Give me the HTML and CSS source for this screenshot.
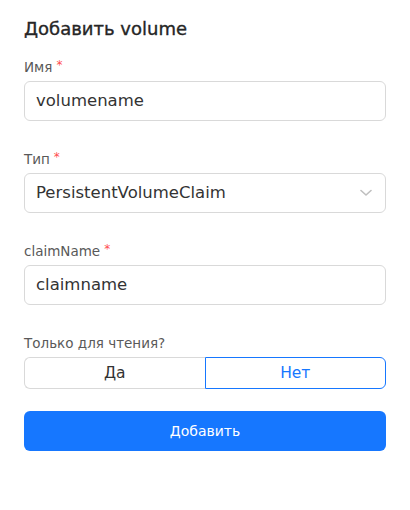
FILE: index.html
```html
<!DOCTYPE html>
<html lang="ru">
<head>
<meta charset="utf-8">
<link rel="stylesheet" href="styles.css">
</head>
<body>
<div class="panel">
  <h2 class="title">Добавить volume</h2>
  <div class="item">
    <div class="label">Имя<span class="req">*</span></div>
    <div class="input">volumename</div>
  </div>
  <div class="item">
    <div class="label">Тип<span class="req">*</span></div>
    <div class="input select">
      <span>PersistentVolumeClaim</span>
      <svg class="chev" width="12" height="8" viewBox="0 0 12 8"><path d="M1 1.5 L6 6 L11 1.5" fill="none" stroke="#bfbfbf" stroke-width="1.6" stroke-linecap="round" stroke-linejoin="round"/></svg>
    </div>
  </div>
  <div class="item">
    <div class="label">claimName<span class="req">*</span></div>
    <div class="input">claimname</div>
  </div>
  <div class="item last">
    <div class="label">Только для чтения?</div>
    <div class="radio">
      <div class="opt">Да</div>
      <div class="opt active">Нет</div>
    </div>
  </div>
  <button class="submit">Добавить</button>
</div>
</body>
</html>
```
FILE: styles.css
```css
html, body { margin: 0; padding: 0; background: #fff; }
body { font-family: "DejaVu Sans", "Noto Sans", sans-serif; color: #333; }
.panel { padding: 16px 24px 24px; width: 362px; }
.title { margin: 0 0 15px; font-size: 18px; font-weight: 400; line-height: 26px; color: #262626; -webkit-text-stroke: 0.35px #262626; }
.item { margin-bottom: 28px; }
.item.last { margin-bottom: 22px; }
.label { font-size: 13.5px; line-height: 20px; color: #595959; height: 24px; }
.req { color: #ff4d4f; font-size: 12px; margin-left: 4px; position: relative; top: -3px; }
.input { box-sizing: border-box; height: 40px; border: 1px solid #d9d9d9; border-radius: 6px; padding: 0 11px; font-size: 16.5px; line-height: 38px; color: #333; display: flex; align-items: center; }
.select { justify-content: space-between; }
.chev { margin-right: 2px; }
.radio { display: flex; height: 32px; }
.opt { flex: 1; box-sizing: border-box; border: 1px solid #d9d9d9; text-align: center; font-size: 15.5px; line-height: 30px; color: #333; }
.opt:first-child { border-radius: 6px 0 0 6px; border-right: none; }
.opt.active { border: 1px solid #1677ff; color: #1677ff; border-radius: 0 6px 6px 0; }
.submit { display: block; width: 100%; height: 40px; border: none; border-radius: 6px; background: #1677ff; color: #fff; font-family: inherit; font-size: 14px; padding: 0; }
```
